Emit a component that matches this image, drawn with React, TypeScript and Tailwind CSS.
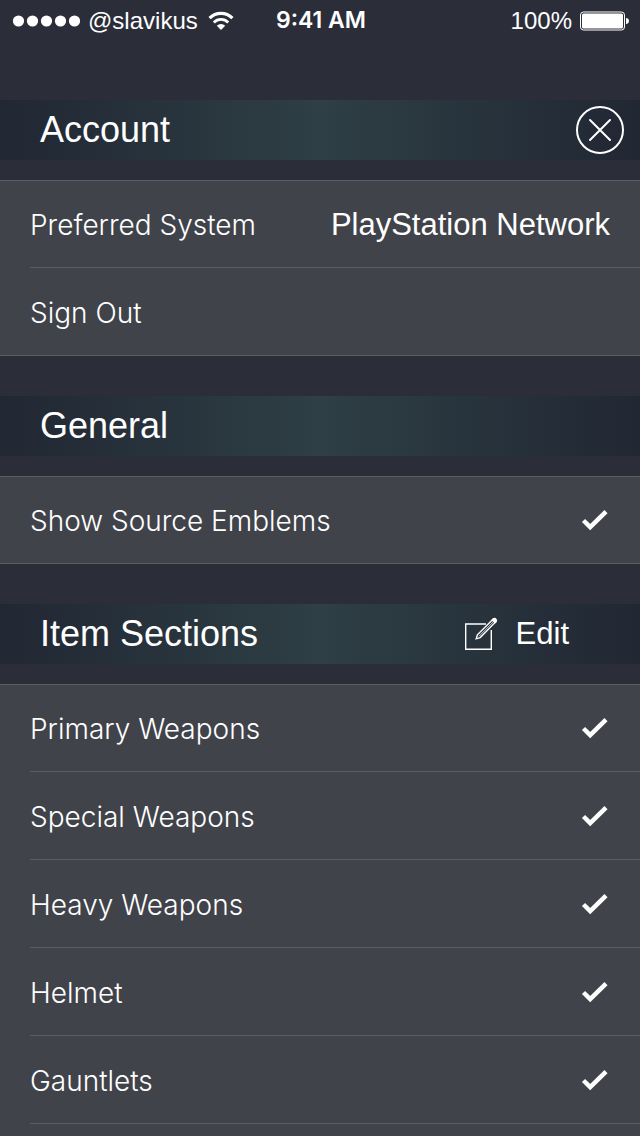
import { useState } from 'react';
import type { ReactNode } from 'react';

function StatusBar() {
  return (
    <div className="grid h-10 grid-cols-[1fr_auto_1fr] items-center pt-px pr-[10px] pl-3 font-['Liberation_Sans',sans-serif] text-2xl text-white">
      <div className="flex items-center">
        <svg width="68" height="12" viewBox="0 0 68 12" fill="currentColor" aria-hidden="true">
          {[6, 20, 34, 48, 62].map((x) => (
            <circle key={x} cx={x + 0.5} cy="6" r="5.6" />
          ))}
        </svg>
        <span className="ml-2">@slavikus</span>
        <svg className="ml-[10px]" width="26" height="20" viewBox="0 0 26 20" fill="none" stroke="currentColor" aria-hidden="true">
          <path d="M1.6 7.2a16 16 0 0 1 22.8 0" strokeWidth="3.2" />
          <path d="M5.8 11.4a10.2 10.2 0 0 1 14.4 0" strokeWidth="2.8" />
          <path d="M13 19l-4.2-4.3a6 6 0 0 1 8.4 0z" fill="currentColor" stroke="none" />
        </svg>
      </div>
      <span className="font-['Inter',sans-serif] text-[23px] font-semibold">9:41 AM</span>
      <div className="flex items-center justify-end">
        <span>100%</span>
        <svg className="ml-2" width="50" height="20" viewBox="0 0 50 20" aria-hidden="true">
          <rect x="0.5" y="1" width="44" height="18" rx="3" fill="none" stroke="#fff" />
          <rect x="2" y="2.5" width="41" height="15" rx="1.5" fill="#fff" />
          <path d="M46 7c2 .3 3 1.400 3 3s-1 2.700-3 3z" fill="#fff" />
        </svg>
      </div>
    </div>
  );
}

function SectionHeader({ title, children }: { title: string; children?: ReactNode }) {
  return (
    <header className="flex h-[60px] items-center justify-between bg-linear-to-r from-[#212733] via-[#2e3f45] to-[#212733] pl-10 font-['Liberation_Sans',sans-serif]">
      <h2 className="text-4xl text-white">{title}</h2>
      {children}
    </header>
  );
}

function Group({ children, fill }: { children: ReactNode; fill?: boolean }) {
  return (
    <div
      className={
        fill
          ? 'mt-5 grow border-t border-[#5a5d65] bg-[#41434b]'
          : 'mt-5 border-y border-[#5a5d65] bg-[#41434b]'
      }
    >
      {children}
    </div>
  );
}

const rowText = "pt-[2px] font-['Inter',sans-serif] text-[28px] font-light text-white";

function CheckRow({ label, divided }: { label: string; divided?: boolean }) {
  const [checked, setChecked] = useState(true);
  return (
    <label
      className={`ml-[30px] flex cursor-pointer items-center justify-between pr-8 ${rowText} ${
        divided ? 'h-[88px] border-b border-[#5a5d65] first:h-[87px]' : 'h-[86px]'
      }`}
    >
      <span>{label}</span>
      <input
        type="checkbox"
        className="peer sr-only"
        checked={checked}
        onChange={(e) => setChecked(e.target.checked)}
      />
      <svg
        className="invisible peer-checked:visible"
        width="28"
        height="24"
        viewBox="0 0 28 24"
        fill="none"
        stroke="currentColor"
        strokeWidth="4.5"
        aria-hidden="true"
      >
        <path d="M3.500 11.5l6.700 6.700L26 2.700" />
      </svg>
    </label>
  );
}

const sections = ['Primary Weapons', 'Special Weapons', 'Heavy Weapons', 'Helmet', 'Gauntlets'];

export default function App() {
  return (
    <div className="flex min-h-screen flex-col bg-[#2b2e39]">
      <StatusBar />
      <main className="mt-[60px] flex grow flex-col gap-10">
        <section>
          <SectionHeader title="Account">
            <button type="button" aria-label="Close" className="mr-4 text-white">
              <svg width="48" height="48" viewBox="0 0 48 48" fill="none" stroke="currentColor" strokeWidth="2" strokeLinecap="round">
                <circle cx="24" cy="24" r="23" />
                <path d="M14 14l20 20M34 14L14 34" />
              </svg>
            </button>
          </SectionHeader>
          <Group>
            <button
              type="button"
              className={`ml-[30px] flex h-[87px] w-[calc(100%-30px)] items-center justify-between border-b border-[#5a5d65] pr-[30px] ${rowText}`}
            >
              <span>Preferred System</span>
              <span className="font-['Liberation_Sans',sans-serif] text-[31px] font-normal">PlayStation Network</span>
            </button>
            <button type="button" className={`flex h-[87px] w-full items-center pl-[30px] ${rowText}`}>
              Sign Out
            </button>
          </Group>
        </section>

        <section>
          <SectionHeader title="General" />
          <Group>
            <CheckRow label="Show Source Emblems" />
          </Group>
        </section>

        <section className="flex grow flex-col">
          <SectionHeader title="Item Sections">
            <button type="button" className="mr-[71px] flex items-center gap-[18px] text-[31px] text-white">
              <svg width="34" height="34" viewBox="0 0 34 34" fill="none" stroke="currentColor" strokeWidth="1.4" aria-hidden="true">
                <path d="M22 7H1.700v25.300H27.300V13" />
                <path d="M12.200 21.800l1.200-4L29 2.200c1.700-1.400 4.100 1 2.700 2.700L16.200 20.600z" />
                <path d="M15 19.300L29.600 4.600" strokeWidth="0.8" />
                <path d="M28.400 2.900l2.700 2.700 1-1c1.200-1.700-1-3.900-2.700-2.700z" fill="currentColor" />
              </svg>
              Edit
            </button>
          </SectionHeader>
          <Group fill>
            {sections.map((name) => (
              <CheckRow key={name} label={name} divided />
            ))}
          </Group>
        </section>
      </main>
    </div>
  );
}
